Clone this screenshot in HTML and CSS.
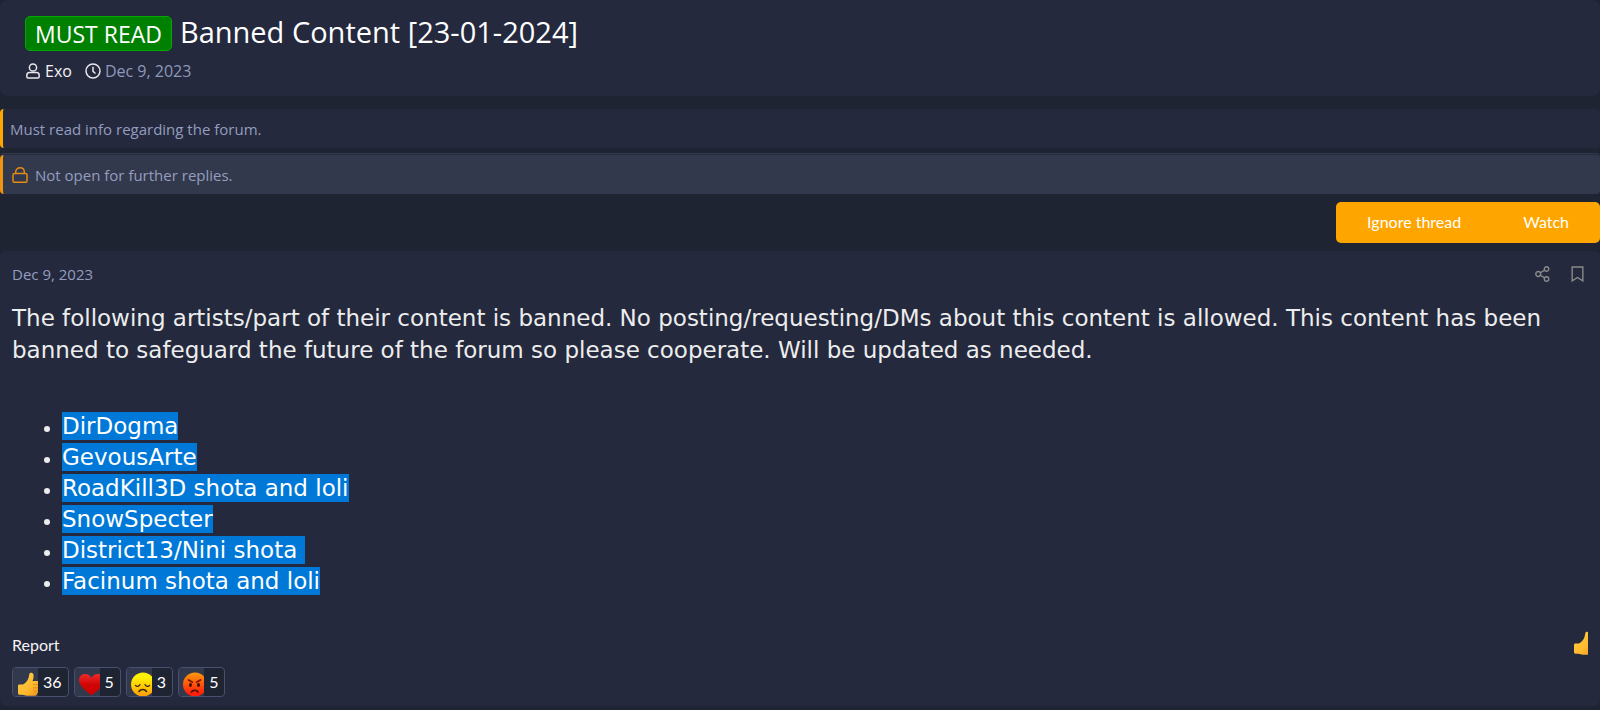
FILE: index.html
```
<!DOCTYPE html>
<html lang="en">
<head>
  <meta charset="UTF-8" />
  <meta name="viewport" content="width=device-width, initial-scale=1.0" />
  <title>Banned Content [23-01-2024]</title>
  <link rel="stylesheet" href="styles.css">
</head>
<body>

  <!-- shared drawings for the reactions -->
  <svg class="defs" width="0" height="0" aria-hidden="true">
    <defs>
      <linearGradient id="thumbFill" x1="0" y1="0" x2="1" y2="1">
        <stop offset="0" stop-color="#ffd047" />
        <stop offset="0.6" stop-color="#fdb92d" />
        <stop offset="1" stop-color="#ee8f1c" />
      </linearGradient>
      <linearGradient id="heartFill" x1="0" y1="0" x2="0" y2="1">
        <stop offset="0" stop-color="#f02a2a" />
        <stop offset="0.5" stop-color="#cf0505" />
        <stop offset="1" stop-color="#c00" />
      </linearGradient>
      <linearGradient id="sadFill" x1="0" y1="0" x2="0" y2="1">
        <stop offset="0.2" stop-color="#fff200" />
        <stop offset="1" stop-color="#ff9d0a" />
      </linearGradient>
      <linearGradient id="angryFill" x1="0" y1="0" x2="0" y2="1">
        <stop offset="0" stop-color="#ff9a0a" />
        <stop offset="0.9" stop-color="#ff1c0a" />
      </linearGradient>
      <symbol id="thumb" viewBox="0 0 24 24">
        <path fill="url(#thumbFill)" d="M1 14c0-1 .6-1.500 1.500-1.500h3.500c2-.7 4.500-3.500 5.500-6.500L12.500 1.500C13 .3 16 .4 16.500 2.500c.4 2-.2 4.500-1 6.500h5.500c2 0 2.500 2.500 1.200 3.300 1.200.8 1 2.700-.2 3.300.9.900.5 2.600-.7 3.100.6 1.200-.2 2.500-1.300 2.700.2 1.400-.8 2.300-2 2.300h-8c-2 0-3-.8-4.500-1H2.500C1.500 22.700 1 22 1 21z" />
        <path fill="none" stroke="#dc8818" stroke-width="0.800" d="M16 12.500h6M16 15.800h6M16 19h5" />
      </symbol>
      <symbol id="heart" viewBox="0 0 24 24">
        <path fill="url(#heartFill)" d="M12.500 23.500C9 20 0 15 0 8c0-3.500 2.500-6 6-6 3 0 5.300 1.500 6.500 4 1.200-2.500 3.500-4 6.500-4 3.500 0 6 2.500 6 6 0 7-9 12-12.500 15.500z" />
      </symbol>
      <symbol id="sad" viewBox="0 0 24 24">
        <circle cx="12" cy="12.500" r="12" fill="url(#sadFill)" />
        <g fill="none" stroke="#3c2a08" stroke-width="1.300" stroke-linecap="round">
          <path d="M4.500 13.500c1.500 1.500 3.500 1 4.500-1M14 12.500c1 2 3 2.500 4.500 1" />
          <path d="M8 19.500c1.500-2.700 6-2.700 7.500 0" stroke-width="1.600" />
        </g>
      </symbol>
      <symbol id="angry" viewBox="0 0 24 24">
        <circle cx="12" cy="12.500" r="12" fill="url(#angryFill)" />
        <path d="M5.500 8l4 2.200M17.500 8l-4 2.200" fill="none" stroke="#801008" stroke-width="1.700" stroke-linecap="round" />
        <ellipse cx="7.500" cy="13" rx="1.400" ry="1.900" fill="#301008" />
        <ellipse cx="15.500" cy="13" rx="1.400" ry="1.900" fill="#301008" />
        <path d="M8.500 20c1-2.300 5.500-2.300 6.500 0" fill="none" stroke="#501008" stroke-width="1.700" stroke-linecap="round" />
      </symbol>
    </defs>
  </svg>

  <header class="thread-header">
    <h1><span class="label">MUST READ</span>Banned Content [23-01-2024]</h1>
    <div class="thread-meta">
      <svg class="icon-user" viewBox="0 0 14 16" aria-hidden="true">
        <circle cx="7" cy="4.500" r="3.600" />
        <path d="M3.500 9.500h7c2 0 2.700 1.500 2.700 3v1c0 .8-.5 1.500-1.300 1.500H2.100C1.300 15 .8 14.300.8 13.500v-1c0-1.500.7-3 2.700-3z" />
      </svg>
      <a href="#">Exo</a>
      <svg class="icon-clock" viewBox="0 0 16 16" aria-hidden="true">
        <circle cx="8" cy="8" r="7" />
        <path d="M8 3.800V8.300L10.500 10.500" />
      </svg>
      <time datetime="2023-12-09">Dec 9, 2023</time>
    </div>
  </header>

  <div class="notice">Must read info regarding the forum.</div>
  <div class="notice locked">
    <svg class="icon-lock" viewBox="0 0 16 16" aria-hidden="true">
      <rect x="1" y="6.500" width="14" height="8.800" rx="1.500" />
      <path d="M3.700 6.500V4.800C3.700 2.500 5.500.8 8 .8s4.300 1.700 4.300 4v1.700" />
    </svg>
    Not open for further replies.
  </div>

  <div class="thread-actions">
    <div class="button-group">
      <button type="button">Ignore thread</button>
      <button type="button">Watch</button>
    </div>
  </div>

  <article class="post">
    <div class="post-top">
      <time datetime="2023-12-09">Dec 9, 2023</time>
      <div class="post-tools">
        <a href="#" aria-label="Share">
          <svg viewBox="0 0 14 15" aria-hidden="true">
            <circle cx="3" cy="7.500" r="2.300" />
            <circle cx="10.800" cy="2.800" r="2.100" />
            <circle cx="10.800" cy="12.200" r="2.100" />
            <path d="M5 6.300l4-2.400M5 8.700l4 2.400" />
          </svg>
        </a>
        <a href="#" aria-label="Bookmark">
          <svg viewBox="0 0 14 15" aria-hidden="true">
            <path d="M2 1h10v13l-5-3.200L2 14z" />
          </svg>
        </a>
      </div>
    </div>

    <div class="post-body">
      <p>The following artists/part of their content is banned. No posting/requesting/DMs about this content is allowed. This content has been banned to safeguard the future of the forum so please cooperate. Will be updated as needed.</p>
      <ul>
        <li><span>DirDogma</span></li>
        <li><span>GevousArte</span></li>
        <li><span>RoadKill3D shota and loli</span></li>
        <li><span>SnowSpecter</span></li>
        <li><span>District13/Nini shota </span></li>
        <li><span>Facinum shota and loli</span></li>
      </ul>
    </div>

    <div class="post-footer">
      <a href="#">Report</a>
      <button type="button" class="react" aria-label="Like">
        <svg viewBox="0 0 24 24" aria-hidden="true"><use href="#thumb" /></svg>
      </button>
    </div>

    <div class="reactions">
      <button type="button" class="reaction"><span><svg aria-hidden="true"><use href="#thumb" /></svg></span>36</button>
      <button type="button" class="reaction"><span><svg aria-hidden="true"><use href="#heart" /></svg></span>5</button>
      <button type="button" class="reaction"><span><svg aria-hidden="true"><use href="#sad" /></svg></span>3</button>
      <button type="button" class="reaction"><span><svg aria-hidden="true"><use href="#angry" /></svg></span>5</button>
    </div>
  </article>

</body>
</html>
```
FILE: styles.css
```
* {
  box-sizing: border-box;
}

body {
  margin: 0;
  background: #1f2433;
  color: #ededed;
  font-family: "Open Sans", "Noto Sans", sans-serif;
  font-size: 16px;
  line-height: 24px;
}

a {
  color: #f4f4f4;
  text-decoration: none;
}

button {
  border: 0;
  padding: 0;
  background: none;
  font: inherit;
  color: #fff;
  cursor: pointer;
}

svg {
  display: block;
  flex: none;
  fill: none;
}

.defs {
  position: absolute;
}

/* Thread header */
.thread-header {
  padding: 14px 25px 13px;
  background: #24293d;
  border-radius: 8px;
}

.thread-header h1 {
  display: flex;
  align-items: baseline;
  gap: 8px;
  margin: 0;
  color: #fff;
  font-size: 29px;
  font-weight: 400;
  line-height: 36px;
}

.label {
  padding: 1px 9px 0;
  background: #008000;
  border: 1px solid #00a800;
  border-radius: 5px;
  font-size: 23px;
  line-height: 32px;
}

.thread-meta {
  display: flex;
  align-items: center;
  gap: 4px;
  margin-top: 8px;
  color: #8f98b8;
}

.thread-meta svg {
  height: 16px;
  stroke: #e8e8e8;
  stroke-width: 1.500;
}

.icon-user {
  width: 16px;
}

.icon-clock {
  width: 16px;
  margin-left: 9px;
}

/* Notices */
.notice {
  display: flex;
  align-items: center;
  gap: 7px;
  margin-top: 13px;
  padding: 8px 7px 7px;
  background: #24293d;
  border-left: 3px solid #ffa500;
  border-radius: 4px;
  color: #949dbf;
  font-size: 15px;
}

.notice.locked {
  margin-top: 7px;
  padding-left: 9px;
  background: #33394c;
  border-left-color: #f0930f;
  box-shadow: 0 -1px #24293d, 0 -2px #33394c;
}

.icon-lock {
  width: 16px;
  height: 16px;
  stroke: #e38b12;
  stroke-width: 1.500;
}

/* Thread buttons */
.thread-actions {
  display: flex;
  justify-content: flex-end;
  margin: 8px 0;
}

.button-group {
  display: flex;
  background: #ffa500;
  border-radius: 5px;
}

.button-group button {
  padding: 7px 31px 9px;
  font-family: Lato, sans-serif;
  line-height: 25px;
}

/* Post */
.post {
  padding: 11px 12px 9px;
  background: #24293d;
  border-radius: 6px;
}

.post-top {
  display: flex;
  align-items: center;
  justify-content: space-between;
  color: #949dbf;
  font-size: 15px;
}

.post-tools {
  display: flex;
  gap: 20px;
  padding-right: 3px;
}

.post-tools svg {
  width: 15px;
  height: 16px;
  stroke: #8a8a8a;
  stroke-width: 1.300;
}

.post-body {
  margin-top: 16px;
}

.post-body p,
.post-body li span {
  font-family: "DejaVu Sans", sans-serif;
  font-size: 23px;
}

.post-body p {
  margin: 0;
  line-height: 32px;
}

.post-body ul {
  margin: 45px 0 0;
  padding-left: 50px;
}

.post-body li span {
  padding: 1px 0;
  background: #0078d7;
  color: #fff;
  line-height: 31px;
  white-space: pre-wrap;
}

.post-footer {
  display: flex;
  align-items: flex-end;
  justify-content: space-between;
  margin-top: 32px;
}

.post-footer a,
.reaction {
  font-family: Lato, sans-serif;
}

/* the like icon is wider than its box */
.react {
  width: 15px;
  height: 28px;
  overflow: hidden;
}

.react svg {
  width: 24px;
  height: 26px;
}

.reactions {
  display: flex;
  gap: 5px;
  margin-top: 10px;
}

.reaction {
  display: flex;
  padding-right: 6px;
  background: #1f2433;
  border: 1px solid #47506d;
  border-radius: 4px;
  line-height: 28px;
  overflow: hidden;
}

.reaction span {
  width: 25px;
  height: 28px;
  margin-right: 5px;
  padding: 4px 0 0 4px;
  background: #33394c;
  overflow: hidden;
}

.reaction svg {
  width: 24px;
  height: 24px;
}
```
